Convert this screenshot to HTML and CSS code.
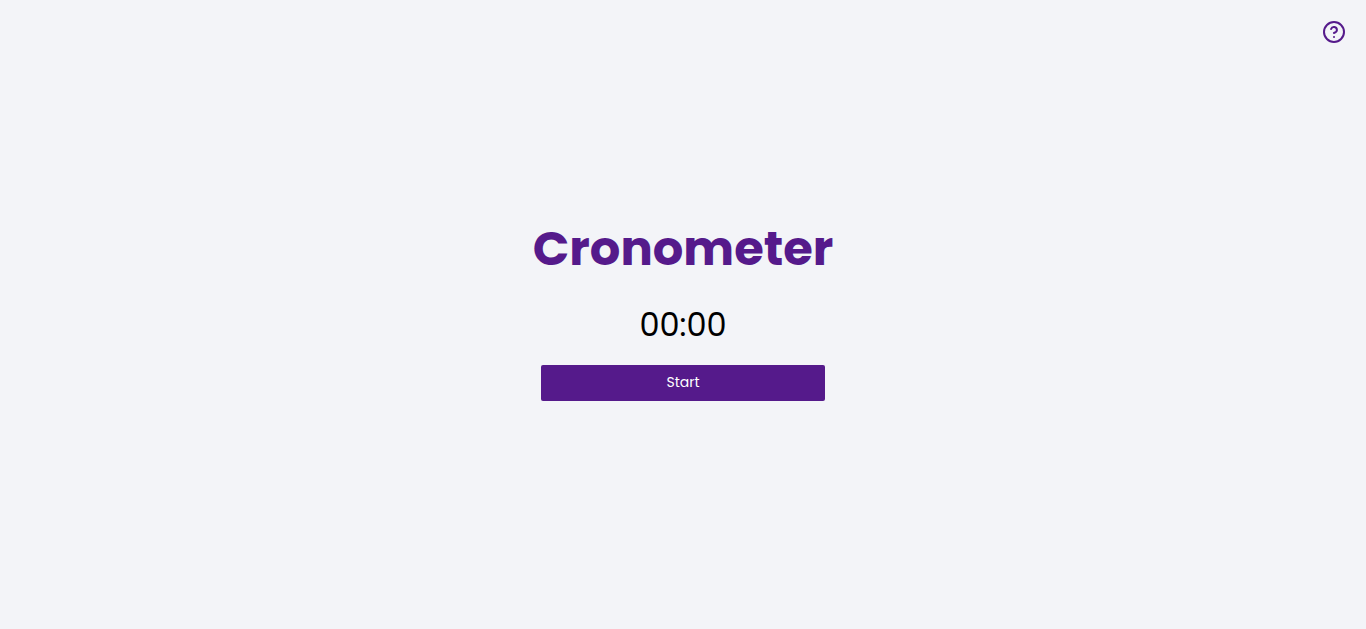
FILE: index.html
```html
<!DOCTYPE html>
<html lang="en">
<head>
  <meta charset="utf-8">
  <meta name="viewport" content="width=device-width, initial-scale=1">
  <title>Cronometer</title>
  <link rel="stylesheet" href="styles.css">
</head>
<body class="page">
  <header class="topbar">
    <button class="help" type="button" aria-label="Help">
      <svg class="help-icon" viewBox="0 0 24 24" fill="none" stroke="currentColor" stroke-width="2" stroke-linecap="round" stroke-linejoin="round" aria-hidden="true">
        <circle cx="12" cy="12" r="10"/>
        <path d="M9.09 9a3 3 0 0 1 5.83 1c0 2-3 3-3 3"/>
        <path d="M12 17h.01"/>
      </svg>
    </button>
  </header>
  <main class="timer">
    <h1 class="title">Cronometer</h1>
    <time class="clock">00:00</time>
    <button class="start" type="button">Start</button>
  </main>
</body>
</html>
```

FILE: styles.css
```css
* {
  box-sizing: border-box;
  margin: 0;
  padding: 0;
}

.page {
  min-height: 100vh;
  display: grid;
  grid-template-rows: 1fr auto 1fr;
  background: #f3f4f8;
  color: #000;
  font-family: Poppins, Inter, sans-serif;
}

.topbar {
  display: flex;
  justify-content: flex-end;
  align-items: flex-start;
  padding: 20px;
}

.help {
  display: flex;
  border: 0;
  background: none;
  color: #551a8b;
  cursor: pointer;
}

.help-icon {
  width: 24px;
  height: 24px;
}

.timer {
  display: flex;
  flex-direction: column;
  align-items: center;
  padding-bottom: 16px;
}

.title {
  color: #551a8b;
  font-size: 48px;
  font-weight: 700;
  line-height: 72px;
}

.clock {
  margin-top: 16px;
  font-size: 32px;
  line-height: 48px;
}

.start {
  width: 284px;
  max-width: 90%;
  height: 36px;
  margin-top: 16px;
  border: 0;
  border-radius: 2px;
  background: #551a8b;
  color: #fff;
  font-family: inherit;
  font-size: 14px;
  cursor: pointer;
}
```
